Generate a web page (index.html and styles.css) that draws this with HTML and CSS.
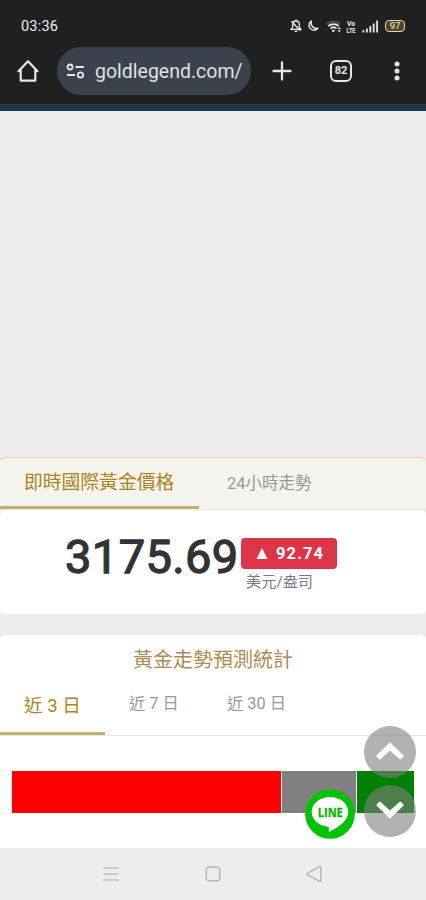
FILE: index.html
```html
<!DOCTYPE html>
<html lang="zh-Hant">
<head>
<meta charset="utf-8">
<meta name="viewport" content="width=device-width, initial-scale=1">
<title>即時國際黃金價格</title>
<link rel="stylesheet" href="styles.css">
</head>
<body>
<div class="phone">
  <header class="chrome">
    <div class="status">
      <span class="clock">03:36</span>
      <div class="status-icons">
        <svg class="bell" width="12" height="14" viewBox="0 0 12 14" fill="none" stroke="#f0f0f0" stroke-width="1.300"><path d="M1.200 10.300h9.600L9.300 8V5.400C9.300 3.300 8 2 6 2S2.700 3.300 2.700 5.400V8ZM6 .6V2M4.600 12.400h2.800M1.500 2.300l8.800 9.500"/></svg>
        <svg class="moon" width="12" height="12" viewBox="0 0 12 12" fill="none" stroke="#f0f0f0" stroke-width="1.400" stroke-linejoin="round"><path d="M4.300 1A5 5 0 1 0 11 8.200C6.500 9.200 3.200 5.500 4.300 1Z"/></svg>
        <svg class="wifi" width="16" height="13" viewBox="0 0 16 13" fill="none" stroke="#f0f0f0" stroke-width="1.700"><path stroke="#5c5c5c" d="M.8 4.200C4.500.6 10.500.6 14.200 4.200"/><path d="M2.300 6.200c3-2.900 7.500-2.900 10.500 0M4.500 8.600c1.800-1.700 4.300-1.700 6 0"/><circle cx="7.300" cy="10.800" r="1.300" fill="#f0f0f0" stroke="none"/><path fill="#f0f0f0" stroke="none" d="m11.500 9 1.700-2 1.700 2zm0 1.200 1.700 2 1.700-2z"/></svg>
        <svg class="volte" width="10" height="13" viewBox="0 0 10 13"><text x="5" y="6" text-anchor="middle" textLength="8" lengthAdjust="spacingAndGlyphs">Vo</text><text x="5" y="12.500" text-anchor="middle" textLength="9" lengthAdjust="spacingAndGlyphs">LTE</text></svg>
        <svg class="signal" width="17" height="13" viewBox="0 0 17 13" fill="#e8e8e8"><path d="M.5 10h1.800v2.500H.5zM4 8.500h1.800v4H4zM7.400 6h1.800v6.500H7.400zM10.800 3.500h1.800v9h-1.800zM14.200.5H16v12h-1.800z"/></svg>
        <span class="battery">97</span>
      </div>
    </div>
    <div class="toolbar">
      <svg class="home" width="22" height="24" viewBox="0 0 22 24" fill="none" stroke="#e6e6e6" stroke-width="2.200" stroke-linejoin="round" stroke-linecap="round"><path d="M1.500 12.200 11 2.300l9.500 9.900M3.700 10.500v11.200h14.600V10.500"/></svg>
      <div class="address">
        <svg width="19" height="16" viewBox="0 0 19 16" fill="none" stroke="#e3e5e9" stroke-width="1.800"><circle cx="4" cy="4" r="2.500"/><path d="M9.500 4H18M1 12h8"/><circle cx="14.500" cy="12" r="2.700"/></svg>
        <span class="url">goldlegend.com/</span>
      </div>
      <svg class="plus" width="20" height="20" viewBox="0 0 20 20" fill="none" stroke="#e6e6e6" stroke-width="2.300" stroke-linecap="round"><path d="M10 1.500v17M1.500 10h17"/></svg>
      <span class="tab-count">82</span>
      <svg class="more" width="6" height="20" viewBox="0 0 6 20" fill="#e6e6e6"><circle cx="3" cy="3" r="2.500"/><circle cx="3" cy="10" r="2.500"/><circle cx="3" cy="17" r="2.500"/></svg>
    </div>
  </header>
  <div class="site-strip"></div>
  <main>
    <div class="banner-space"></div>
    <section class="price">
      <nav class="price-tabs">
        <span class="price-tab active">即時國際黃金價格</span>
        <span class="price-tab">24小時走勢</span>
      </nav>
      <div class="price-body">
        <span class="amount">3175.69</span>
        <div class="change">
          <span class="badge"><svg width="12" height="11" viewBox="0 0 12 11" fill="#fff"><path d="M6 0l5.500 11H.5z"/></svg>92.74</span>
          <span class="unit">美元/盎司</span>
        </div>
      </div>
    </section>
    <section class="forecast">
      <h2>黃金走勢預測統計</h2>
      <nav class="range-tabs">
        <span class="range active">近 3 日</span>
        <span class="range week">近 7 日</span>
        <span class="range month">近 30 日</span>
      </nav>
      <div class="bar"><span class="up"></span><span class="flat"></span><span class="down"></span></div>
    </section>
  </main>
  <svg class="line-button" width="50" height="50" viewBox="0 0 50 50"><circle cx="25" cy="25" r="24.800" fill="#00c300"/><path fill="#fff" d="M25 8C14.800 8 6.700 14.500 6.700 23c0 7.500 6.700 13.700 16 14.700 1.600.2 1.400 1.300.9 4.300-.1.700.3 1.100 1 .7C31 39.500 43.300 32.500 43.300 23 43.300 14.500 35.200 8 25 8Z"/><text x="25.300" y="27.500" text-anchor="middle" textLength="25" lengthAdjust="spacingAndGlyphs">LINE</text></svg>
  <div class="scroll-buttons">
    <span class="round"><svg width="30" height="20" viewBox="0 0 30 20"><path d="M15 1.300 28.300 14.200q.7.800 0 1.500l-2.300 2.400q-.8.700-1.600 0L15 9.400l-9.400 8.700q-.8.700-1.600 0l-2.300-2.400q-.7-.7 0-1.500Z"/></svg></span>
    <span class="round lower"><svg width="30" height="20" viewBox="0 0 30 20"><path d="M15 18.700 28.300 5.800q.7-.8 0-1.500L26 1.900q-.8-.7-1.600 0L15 10.600 5.600 1.900q-.8-.7-1.600 0L1.700 4.300q-.7.700 0 1.500Z"/></svg></span>
  </div>
  <footer class="system-nav">
    <svg width="16" height="16" viewBox="0 0 16 16"><path d="M.5 2h15M.5 8h15M.5 14h15"/></svg>
    <svg width="16" height="16" viewBox="0 0 16 16"><rect x="1.200" y="1.200" width="13.600" height="13.600" rx="3"/></svg>
    <svg width="16" height="18" viewBox="0 0 16 18"><path d="M13.500 1.700 2 8.100q-1.200.9 0 1.800l11.500 6.400q1.300.4 1.300-1V2.700q0-1.400-1.300-1Z"/></svg>
  </footer>
</div>
</body>
</html>
```

FILE: styles.css
```css
* { box-sizing: border-box; }
body { margin: 0; background: #ededed; font-family: Roboto, "Noto Sans CJK TC", sans-serif; }
svg { display: block; flex: none; }
.phone { position: relative; width: 426px; height: 900px; overflow: hidden; display: flex; flex-direction: column; }
.chrome { height: 104px; background: #202020; flex: none; }
.status { height: 47px; padding: 5px 21px 0 21px; display: flex; align-items: center; justify-content: space-between; color: #f0f0f0; }
.clock { font-size: 14.500px; letter-spacing: .2px; }
.status-icons { display: flex; align-items: center; }
.moon { margin-left: 5px; }
.wifi { margin-left: 7px; }
.volte { margin-left: 4px; fill: #f0f0f0; overflow: visible; }
.volte text { font: 700 8px Roboto, sans-serif; }
.signal { margin-left: 6px; }
.battery { margin-left: 6px; width: 20px; height: 12px; border: 1.500px solid #ddd8c4; border-radius: 4px; background: #51451f; font-size: 9.500px; line-height: 10px; text-align: center; }
.toolbar { display: flex; align-items: center; height: 48px; padding: 0 26px 0 17px; }
.address { width: 194px; height: 48px; margin-left: 18px; border-radius: 24px; background: #3c424d; display: flex; align-items: center; padding: 0 9px; gap: 10px; overflow: hidden; }
.url { font-size: 19.500px; color: #dfe1e6; white-space: nowrap; width: 147px; overflow: hidden; }
.plus { margin-left: 21px; }
.tab-count { margin-left: 38px; width: 22px; height: 22px; border: 2px solid #e6e6e6; border-radius: 6px; color: #e6e6e6; font-size: 11px; font-weight: 700; line-height: 18px; text-align: center; }
.more { margin-left: auto; }
.site-strip { height: 7px; background: #1f3548; border-top: 1px solid #3b3935; flex: none; }
main { height: 737px; flex: none; }
.banner-space { height: 346px; }
.price { height: 157px; }
.price-tabs { height: 53px; display: flex; background: #f5f3ee; border-top: 1px solid #e5cda4; border-radius: 5px 5px 0 0; border-bottom: 1px solid #e5e5e3; }
.price-tab { width: 112px; padding-top: 13px; margin-left: 28px; font-size: 16.500px; line-height: 26px; color: #999; white-space: nowrap; }
.price-tab.active { width: 199px; margin: 0; padding: 13px 0 0 24px; font-size: 18.800px; line-height: 24px; color: #ac8521; border-bottom: 3px solid #c9ae6b; }
.price-body { height: 104px; background: #fff; border-radius: 5px; display: flex; padding: 28px 0 0 65px; }
.amount { width: 176px; font-size: 47px; line-height: 38px; font-weight: 400; letter-spacing: .4px; -webkit-text-stroke: 1.300px #333; color: #333; }
.change { display: flex; flex-direction: column; }
.badge { display: flex; align-items: center; gap: 8px; width: 96px; height: 31px; padding: 0 0 0 15px; background: #dc3547; border-radius: 4px; color: #fff; font-size: 16.500px; font-weight: 700; letter-spacing: 1.100px; }
.unit { margin-left: 5px; color: #737b84; font-size: 15.200px; line-height: 26px; }
.forecast { margin-top: 21px; height: 213px; background: #fff; border-radius: 5px 5px 0 0; padding-top: 11px; }
.forecast h2 { margin: 0; text-align: center; font-size: 20px; line-height: 28px; font-weight: 400; color: #b18952; }
.range-tabs { display: flex; height: 62px; border-bottom: 1px solid #e5e7e9; }
.range { color: #999; font-size: 16.300px; line-height: 24px; padding-top: 18px; }
.range.active { width: 105px; padding: 20px 0 0 24px; color: #ac8521; font-size: 18.600px; border-bottom: 3px solid #c9ae6b; }
.week { margin-left: 24px; width: 98px; }
.bar { display: flex; gap: 1px; height: 42px; margin: 35px 12px 0; }
.up { width: 268.500px; background: #f00; }
.flat { width: 74.500px; background: #808080; }
.down { flex: 1; background: #008000; }
.system-nav { height: 52px; background: #ededed; display: flex; justify-content: space-between; align-items: center; padding: 0 104px 0 103px; }
.system-nav svg { fill: none; stroke: #aaa; stroke-width: 1.200; }
.line-button { position: absolute; left: 305px; top: 789px; }
.line-button text { font: 700 12.500px "Open Sans", sans-serif; fill: #00b900; stroke: #00b900; stroke-width: .3px; }
.scroll-buttons { position: absolute; left: 364px; top: 726px; display: flex; flex-direction: column; gap: 7px; }
.round { width: 52px; height: 52px; border-radius: 50%; background: rgba(126, 126, 126, .6); display: flex; align-items: center; justify-content: center; padding-bottom: 3px; }
.round path { fill: #fff; }
.round.lower { padding: 0 0 2px; }
```
